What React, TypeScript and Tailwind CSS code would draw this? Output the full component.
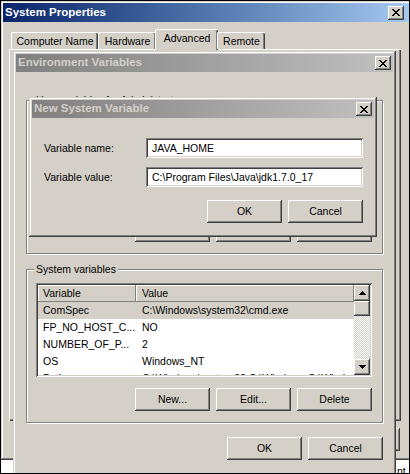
import React from 'react';

// classic 3D edges
const winEdge =
  'shadow-[inset_-1px_-1px_0_#404040,inset_1px_1px_0_#d4d0c8,inset_-2px_-2px_0_#808080,inset_2px_2px_0_#ffffff]';
const btnEdge =
  'shadow-[inset_-1px_-1px_0_#404040,inset_1px_1px_0_#ffffff,inset_-2px_-2px_0_#808080]';
const sunkenEdge =
  'shadow-[inset_1px_1px_0_#808080,inset_-1px_-1px_0_#ffffff,inset_2px_2px_0_#404040,inset_-2px_-2px_0_#d4d0c8]';
const etched = 'border border-[#808080] shadow-[inset_1px_1px_0_#ffffff,1px_1px_0_#ffffff]';

const CloseGlyph = () => (
  <svg width="8" height="7" viewBox="0 0 8 7" shapeRendering="crispEdges">
    <rect x="0" y="0" width="2" height="1" fill="#000" />
    <rect x="6" y="0" width="2" height="1" fill="#000" />
    <rect x="1" y="1" width="2" height="1" fill="#000" />
    <rect x="5" y="1" width="2" height="1" fill="#000" />
    <rect x="2" y="2" width="4" height="1" fill="#000" />
    <rect x="3" y="3" width="2" height="1" fill="#000" />
    <rect x="2" y="4" width="4" height="1" fill="#000" />
    <rect x="1" y="5" width="2" height="1" fill="#000" />
    <rect x="5" y="5" width="2" height="1" fill="#000" />
    <rect x="0" y="6" width="2" height="1" fill="#000" />
    <rect x="6" y="6" width="2" height="1" fill="#000" />
  </svg>
);

const Arrow = ({ down = false }: { down?: boolean }) => (
  <svg width="7" height="4" viewBox="0 0 7 4" shapeRendering="crispEdges" className={down ? 'rotate-180' : ''}>
    <rect x="3" y="0" width="1" height="1" fill="#000" />
    <rect x="2" y="1" width="3" height="1" fill="#000" />
    <rect x="1" y="2" width="5" height="1" fill="#000" />
    <rect x="0" y="3" width="7" height="1" fill="#000" />
  </svg>
);

const CloseBtn = () => (
  <div className={`ml-auto flex h-[14px] w-[16px] shrink-0 items-center justify-center bg-[#d4d0c8] ${btnEdge}`}>
    <CloseGlyph />
  </div>
);

const Btn = ({ label }: { label: string }) => (
  <div className={`flex h-[23px] w-[75px] shrink-0 items-center justify-center bg-[#d4d0c8] ${btnEdge}`}>{label}</div>
);

const TitleBar = ({ title, active = false }: { title: string; active?: boolean }) => (
  <div
    className={`flex h-[18px] shrink-0 items-center pl-[2px] pr-[2px] bg-linear-to-r ${
      active ? 'from-[#0a246a] to-[#a6caf0] text-white' : 'from-[#808080] to-[#c0c0c0] text-[#d4d0c8]'
    }`}
  >
    <span className="text-[11.5px] font-bold whitespace-nowrap">{title}</span>
    <CloseBtn />
  </div>
);

const Scrollbar = () => (
  <div className="flex w-[16px] shrink-0 flex-col">
    <div className={`flex h-[16px] items-center justify-center bg-[#d4d0c8] ${btnEdge}`}>
      <Arrow />
    </div>
    <div className={`h-[15px] bg-[#d4d0c8] ${btnEdge}`} />
    <div className="flex-1 bg-[repeating-conic-gradient(#d4d0c8_0%_25%,#ffffff_0%_50%)] [background-size:2px_2px]" />
    <div className={`flex h-[16px] items-center justify-center bg-[#d4d0c8] ${btnEdge}`}>
      <Arrow down />
    </div>
  </div>
);

const ListView = ({ rows, selected }: { rows: [string, string][]; selected: number }) => (
  <div className={`flex h-[94px] w-[336px] shrink-0 bg-white p-[2px] ${sunkenEdge}`}>
    <div className="flex min-w-0 flex-1 flex-col overflow-hidden">
      <div className="flex h-[17px] shrink-0">
        <div className="flex w-[98px] shrink-0 items-center bg-[#d4d0c8] pl-[5px] shadow-[inset_-1px_-1px_0_#808080,inset_1px_1px_0_#ffffff]">
          Variable
        </div>
        <div className="flex flex-1 items-center bg-[#d4d0c8] pl-[6px] shadow-[inset_-1px_-1px_0_#808080,inset_1px_1px_0_#ffffff]">
          Value
        </div>
      </div>
      {rows.map((r, i) => (
        <div key={i} className={`flex h-[17px] shrink-0 items-center ${i === selected ? 'bg-[#d4d0c8]' : ''}`}>
          <span className="w-[98px] shrink-0 overflow-hidden pl-[5px] whitespace-nowrap">{r[0]}</span>
          <span className="flex-1 overflow-hidden pl-[6px] whitespace-nowrap">{r[1]}</span>
        </div>
      ))}
    </div>
    <Scrollbar />
  </div>
);

const GroupBox = ({ label, rows }: { label: string; rows: [string, string][] }) => (
  <div className={`relative flex h-[154px] w-[357px] shrink-0 flex-col pt-[13px] pl-[9px] pr-[10px] ${etched}`}>
    <span className="absolute -top-[7px] left-[7px] bg-[#d4d0c8] px-[2px] leading-[13px] whitespace-nowrap">{label}</span>
    <ListView rows={rows} selected={0} />
    <div className="mt-[11px] flex justify-end gap-[6px]">
      <Btn label="New..." />
      <Btn label="Edit..." />
      <Btn label="Delete" />
    </div>
  </div>
);

const tabIdle =
  'mt-[3px] flex h-[17px] items-center justify-center rounded-t-[2px] border-t border-l border-white shadow-[inset_-1px_0_0_#404040,inset_-2px_0_0_#808080]';

const SystemProperties = () => (
  <div className={`absolute left-0 top-0 flex h-[459px] w-[412px] flex-col bg-[#d4d0c8] p-[2px] ${winEdge}`}>
    <div className="flex h-[19px] shrink-0 items-center bg-linear-to-r from-[#0a246a] to-[#a6caf0] pl-[2px] pr-[7px]">
      <span className="text-[11.5px] font-bold text-white">System Properties</span>
      <CloseBtn />
    </div>
    <div className="relative z-10 mt-[7px] -mb-[1px] ml-[8px] flex h-[21px] items-start">
      <div className={`w-[87px] ${tabIdle}`}>Computer Name</div>
      <div className={`w-[58px] ${tabIdle}`}>Hardware</div>
      <div className="-mx-[1px] flex h-[21px] w-[63px] items-start justify-center rounded-t-[2px] border-t border-l border-white bg-[#d4d0c8] pt-[3px] shadow-[inset_-1px_0_0_#404040,inset_-2px_0_0_#808080]">
        Advanced
      </div>
      <div className={`w-[48px] ${tabIdle}`}>Remote</div>
    </div>
    <div className="ml-[6px] h-[372px] w-[392px] shrink-0 border-t border-l border-white shadow-[inset_-1px_-1px_0_#404040,inset_-2px_-2px_0_#808080]" />
    <div className="mt-[7px] ml-[6px] flex w-[392px] justify-end gap-[6px] pr-[1px]">
      <Btn label="OK" />
      <Btn label="Cancel" />
      <Btn label="Apply" />
    </div>
  </div>
);

const EnvironmentVariables = () => (
  <div className={`absolute left-[12px] top-[50px] flex h-[440px] w-[383px] flex-col bg-[#d4d0c8] p-[3px] ${winEdge}`}>
    <TitleBar title="Environment Variables" />
    <div className="flex flex-col pl-[10px]">
      <div className="mt-[28px]">
        <GroupBox
          label="User variables for Administrator"
          rows={[
            ['TEMP', '%USERPROFILE%\\AppData\\Local\\Temp'],
            ['TMP', '%USERPROFILE%\\AppData\\Local\\Temp'],
          ]}
        />
      </div>
      <div className="mt-[15px]">
        <GroupBox
          label="System variables"
          rows={[
            ['ComSpec', 'C:\\Windows\\system32\\cmd.exe'],
            ['FP_NO_HOST_C...', 'NO'],
            ['NUMBER_OF_P...', '2'],
            ['OS', 'Windows_NT'],
            ['Path', 'C:\\Windows\\system32;C:\\Windows;C:\\Windows\\System32\\Wbem;C:\\'],
          ]}
        />
      </div>
      <div className="mt-[14px] flex justify-end gap-[6px] pr-[10px]">
        <Btn label="OK" />
        <Btn label="Cancel" />
      </div>
    </div>
  </div>
);

const NewVariableDialog = () => (
  <div className={`absolute left-[28px] top-[96px] flex h-[140px] w-[348px] flex-col bg-[#d4d0c8] p-[3px] ${winEdge}`}>
    <TitleBar title="New System Variable" />
    <div className="flex flex-col pl-[12px] pr-[11px]">
      <div className="mt-[20px] flex h-[20px] items-center">
        <span className="w-[102px] shrink-0">Variable name:</span>
        <div className={`flex h-[20px] flex-1 items-center bg-white pl-[6px] ${sunkenEdge}`}>JAVA_HOME</div>
      </div>
      <div className="mt-[9px] flex h-[20px] items-center">
        <span className="w-[102px] shrink-0">Variable value:</span>
        <div className={`flex h-[20px] flex-1 items-center bg-white pl-[6px] whitespace-nowrap ${sunkenEdge}`}>
          C:\Program Files\Java\jdk1.7.0_17
        </div>
      </div>
      <div className="mt-[13px] flex justify-end gap-[6px]">
        <Btn label="OK" />
        <Btn label="Cancel" />
      </div>
    </div>
  </div>
);

export default function App() {
  return (
    <div className="relative h-[474px] w-[410px] overflow-hidden border border-black bg-white font-['Tahoma','Liberation_Sans',sans-serif] text-[10.5px] leading-none text-black">
      <span className="absolute left-[396px] top-[465px] whitespace-nowrap">nt se</span>
      <SystemProperties />
      <EnvironmentVariables />
      <NewVariableDialog />
    </div>
  );
}
